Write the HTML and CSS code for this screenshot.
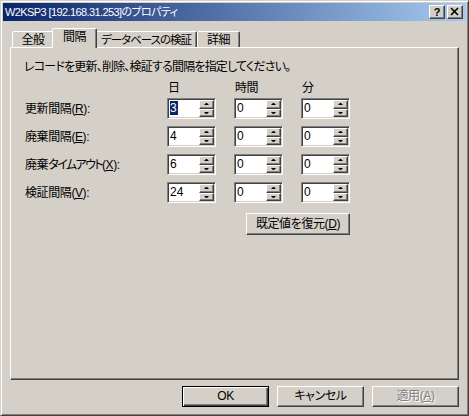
FILE: index.html
```html
<!DOCTYPE html>
<html>
<head>
    <meta charset="UTF-8">
    <title>W2KSP3 [192.168.31.253]のプロパティ</title>
    <link rel="stylesheet" href="styles.css">
</head>
<body>
    <div class="window">
      <div class="titlebar">
        <span class="title">W2KSP3 [192.168.31.253]のプロパティ</span>
        <div class="caption-buttons">
          <span class="cap-btn help">?</span>
          <span class="cap-btn">
            <svg width="10" height="9" viewBox="0 0 10 9"><path d="M1 1 L8 8 M8 1 L1 8" stroke="#000" stroke-width="1.7"/></svg>
          </span>
        </div>
      </div>

      <div class="tabs">
        <div class="tab tab-general">全般</div>
        <div class="tab tab-interval active">間隔</div>
        <div class="tab tab-verify">データベースの検証</div>
        <div class="tab tab-detail">詳細</div>
      </div>

      <div class="panel">
        <p class="desc">レコードを更新、削除、検証する間隔を指定してください。</p>

        <div class="form-head">
          <span></span>
          <span>日</span>
          <span>時間</span>
          <span>分</span>
        </div>

        <div class="form-rows">
          <label>更新間隔(<u>R</u>):</label>
          <div class="spin"><span class="value"><span class="selected">3</span></span><span class="updown"><span class="up"></span><span class="down"></span></span></div>
          <div class="spin"><span class="value">0</span><span class="updown"><span class="up"></span><span class="down"></span></span></div>
          <div class="spin"><span class="value">0</span><span class="updown"><span class="up"></span><span class="down"></span></span></div>

          <label>廃棄間隔(<u>E</u>):</label>
          <div class="spin"><span class="value">4</span><span class="updown"><span class="up"></span><span class="down"></span></span></div>
          <div class="spin"><span class="value">0</span><span class="updown"><span class="up"></span><span class="down"></span></span></div>
          <div class="spin"><span class="value">0</span><span class="updown"><span class="up"></span><span class="down"></span></span></div>

          <label>廃棄<span class="kana">タイムアウト</span>(<u>X</u>):</label>
          <div class="spin"><span class="value">6</span><span class="updown"><span class="up"></span><span class="down"></span></span></div>
          <div class="spin"><span class="value">0</span><span class="updown"><span class="up"></span><span class="down"></span></span></div>
          <div class="spin"><span class="value">0</span><span class="updown"><span class="up"></span><span class="down"></span></span></div>

          <label>検証間隔(<u>V</u>):</label>
          <div class="spin"><span class="value">24</span><span class="updown"><span class="up"></span><span class="down"></span></span></div>
          <div class="spin"><span class="value">0</span><span class="updown"><span class="up"></span><span class="down"></span></span></div>
          <div class="spin"><span class="value">0</span><span class="updown"><span class="up"></span><span class="down"></span></span></div>
        </div>

        <div class="restore-row">
          <button class="btn restore">既定値を復元(<u>D</u>)</button>
        </div>
      </div>

      <div class="actions">
        <button class="btn default">OK</button>
        <button class="btn">キャンセル</button>
        <button class="btn disabled">適用(<u>A</u>)</button>
      </div>
    </div>
</body>
</html>
```

FILE: styles.css
```css
* {
  box-sizing: border-box;
}

body {
  margin: 0;
  background: #d4d0c8;
  font-family: "Liberation Sans", "Noto Sans CJK JP", sans-serif;
  font-size: 12px;
  font-feature-settings: "palt";
  letter-spacing: -0.4px;
  color: #000;
}

.window {
  width: 469px;
  height: 416px;
  display: flex;
  flex-direction: column;
  background: #d4d0c8;
  border: 1px solid;
  border-color: #d4d0c8 #404040 #404040 #d4d0c8;
  box-shadow: inset 1px 1px #fff, inset -1px -1px #808080;
  padding: 2px;
}

/* title bar */
.titlebar {
  height: 18px;
  display: flex;
  align-items: center;
  justify-content: space-between;
  background: linear-gradient(to right, #0a246a, #a6caf0);
  color: #fff;
  padding-left: 2px;
}

.title {
  font-size: 11px;
  line-height: 18px;
  letter-spacing: -0.6px;
}

.caption-buttons {
  display: flex;
  gap: 2px;
  margin-right: 3px;
}

.cap-btn {
  width: 16px;
  height: 14px;
  display: flex;
  align-items: center;
  justify-content: center;
  background: #d4d0c8;
  border: 1px solid;
  border-color: #fff #404040 #404040 #fff;
  box-shadow: inset -1px -1px #808080;
  color: #000;
}

.cap-btn.help {
  font-weight: bold;
  font-size: 11px;
  line-height: 12px;
  letter-spacing: 0;
  padding-bottom: 1px;
}

.cap-btn svg {
  display: block;
  margin-top: -1px;
}

/* tabs */
.tabs {
  display: flex;
  align-items: flex-end;
  height: 19px;
  margin-top: 7px;
  padding-left: 9px;
  position: relative;
  z-index: 1;
}

.tab {
  height: 16px;
  line-height: 16px;
  text-align: center;
  background: #d4d0c8;
  border: 1px solid;
  border-bottom: none;
  border-color: #fff #404040 transparent #fff;
  border-radius: 2px 2px 0 0;
  box-shadow: inset -1px 0 #808080;
  white-space: nowrap;
}

.tab-general { width: 42px; }
.tab-interval { width: 41px; }
.tab-verify { width: 102px; font-size: 11.5px; letter-spacing: -1px; }
.tab-detail { width: 43px; }

.tab.active {
  width: 45px;
  height: 20px;
  margin: 0 -2px -1px;
  line-height: 16px;
  padding-bottom: 3px;
  position: relative;
  z-index: 2;
}

/* tab page */
.panel {
  height: 333px;
  margin: 0 7px;
  border: 1px solid;
  border-color: #fff #404040 #404040 #fff;
  box-shadow: inset -1px -1px #808080;
  padding: 12px 0 0 13px;
  display: flex;
  flex-direction: column;
}

.desc {
  margin: 0;
  line-height: 14px;
  letter-spacing: -0.8px;
  white-space: nowrap;
}

.form-head,
.form-rows {
  display: grid;
  grid-template-columns: 125px repeat(3, 49px);
  column-gap: 18px;
}

.form-head {
  margin-top: 7px;
  line-height: 14px;
}

.form-head span {
  padding-left: 1px;
}

.form-rows {
  margin-top: 3px;
  row-gap: 7px;
  align-items: center;
}

.form-rows label {
  padding-left: 1px;
  line-height: 14px;
  white-space: nowrap;
}

.kana {
  letter-spacing: -1.6px;
}

u {
  text-underline-offset: 1px;
}

/* spin box */
.spin {
  height: 21px;
  display: flex;
  background: #fff;
  border: 1px solid;
  border-color: #808080 #fff #fff #808080;
  box-shadow: inset 1px 1px #404040, inset -1px -1px #d4d0c8;
  padding: 1px;
}

.value {
  flex: 1;
  padding-left: 1px;
  line-height: 17px;
  letter-spacing: 0;
}

.selected {
  background: #0a246a;
  color: #fff;
  padding: 0 1px 0 0;
}

.updown {
  width: 15px;
  display: flex;
  flex-direction: column;
}

.up,
.down {
  display: flex;
  align-items: center;
  justify-content: center;
  background: #d4d0c8;
  border: 1px solid;
  border-color: #fff #404040 #404040 #fff;
  box-shadow: inset -1px -1px #808080;
}

.up { height: 9px; }
.down { height: 8px; }

.up::after,
.down::after {
  content: "";
  width: 1px;
  height: 0;
  border-left: 2px solid transparent;
  border-right: 2px solid transparent;
}

.up::after { border-bottom: 2px solid #000; margin-top: -1px; }
.down::after { border-top: 2px solid #000; margin-top: -1px; }

/* buttons */
.btn {
  font-family: inherit;
  font-size: 12px;
  font-feature-settings: "palt";
  letter-spacing: -0.4px;
  color: #000;
  background: #d4d0c8;
  border: 1px solid;
  border-color: #fff #404040 #404040 #fff;
  box-shadow: inset -1px -1px #808080;
  padding: 0;
  line-height: 17px;
}

.btn.default {
  border-color: #000;
  box-shadow: inset 1px 1px #fff, inset -1px -1px #404040, inset -2px -2px #808080;
}

.btn.disabled {
  color: #808080;
  text-shadow: 1px 1px #fff;
}

.restore-row {
  width: 326px;
  display: flex;
  justify-content: flex-end;
  margin-top: 10px;
}

.restore {
  width: 104px;
  height: 22px;
}

.actions {
  display: flex;
  justify-content: flex-end;
  gap: 8px;
  margin: 6px 7px 0;
}

.actions .btn {
  width: 87px;
  height: 21px;
}
```
